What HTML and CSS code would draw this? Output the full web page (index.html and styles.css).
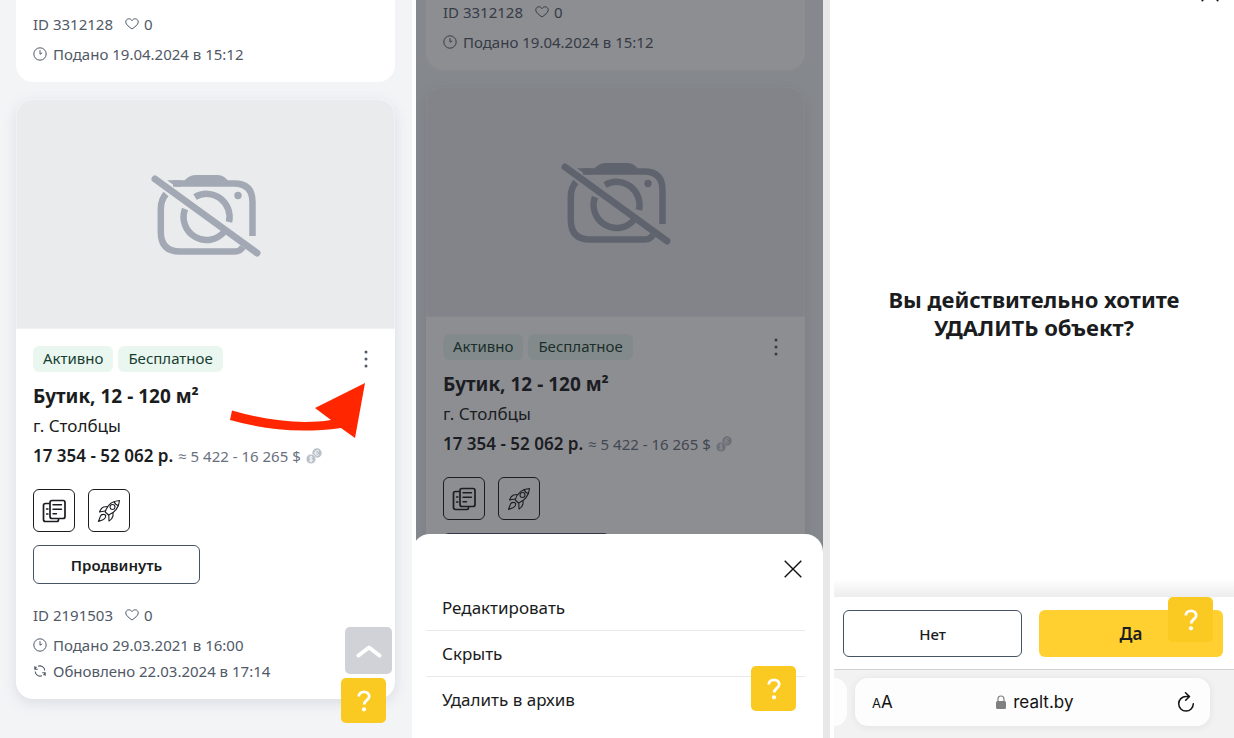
FILE: index.html
```html
<!DOCTYPE html>
<html lang="ru">
<head>
<meta charset="utf-8">
<meta name="viewport" content="width=device-width, initial-scale=1">
<title>Удаление объекта</title>
<link rel="stylesheet" href="styles.css">
</head>
<body>
<svg class="sprite" aria-hidden="true">
  <symbol id="heart" viewBox="0 0 14 12"><path d="M7 11C4.600 9.200.8 6.800.8 3.900.8 2.100 2.200.8 3.800.8 5.200.8 6.300 1.500 7 2.600 7.700 1.500 8.800.8 10.200.8 11.800.8 13.200 2.100 13.200 3.900 13.200 6.800 9.400 9.200 7 11Z" fill="none" stroke="currentColor"/></symbol>
  <symbol id="clock" viewBox="0 0 14 14"><circle cx="7" cy="7" r="6.200" fill="none" stroke="currentColor"/><path d="M7 3.200V7.200L9.200 5.900" fill="none" stroke="currentColor"/></symbol>
  <symbol id="sync" viewBox="0 0 14 14"><path d="M5 2.200A5 5 0 0 1 11.800 6.500M9 11.800A5 5 0 0 1 2.200 7.500M1.800 2.300V5.300H4.800M2 5A5 5 0 0 1 3.500 3M12.200 11.700V8.700H9.200M12 9A5 5 0 0 1 10.500 11" fill="none" stroke="currentColor" stroke-width="1.100"/></symbol>
  <symbol id="camera" viewBox="0 0 110 82">
    <g fill="none" stroke="currentColor" stroke-width="6.500">
      <path d="M15 19C11.500 23 9.800 28 9.800 34V57Q9.800 76.500 29 76.500H84Q89 76.500 92 72"/>
      <path d="M22 8.500H83Q101.500 8.500 101.500 27V61"/>
      <path d="M34 34A23 23 0 0 0 73 57"/>
      <path d="M44 22A23 23 0 0 1 78 47"/>
      <path d="M4 4 106 78" stroke-linecap="round" stroke-width="7"/>
    </g>
    <path d="M32 7Q38 0 44 0H67Q73 0 78 7ZM16 5.200H30V11.700H25Z" fill="currentColor"/>
    <circle cx="87" cy="20.500" r="3.700" fill="currentColor"/>
  </symbol>
  <symbol id="coins" viewBox="0 0 16 16"><circle cx="11" cy="5" r="4.700" fill="currentColor"/><circle cx="5" cy="11" r="4.900" fill="currentColor" stroke="#fff" stroke-width=".7"/><path d="M13 3.200A2.400 2.400 0 1 0 13 6.600M9 5H12M6.700 9.500C5.700 8.300 3.500 8.800 3.700 10.100S6.600 11 6.500 12.200 4 13.600 3.200 12.500M5 7.700V14.300" fill="none" stroke="#fff" stroke-width=".9"/></symbol>
  <symbol id="docs" viewBox="0 0 24 24"><g fill="none" stroke="currentColor" stroke-width="1.700" stroke-linecap="round" stroke-linejoin="round"><path d="M7 4.500H3.500Q1.500 4.500 1.500 6.500V20.500Q1.500 22.500 3.500 22.500H15Q16.500 22.500 16.500 20.500"/><rect x="8" y="1.500" width="15" height="18" rx="2"/><path d="M11 5.800H19.500M11 10.300H19.500M11 14.800H14.500M4.500 10H6M4.500 15H6" stroke-width="1.400"/></g></symbol>
  <symbol id="rocket" viewBox="0 0 24 24"><g fill="none" stroke="currentColor" stroke-width="1.100" stroke-linejoin="round"><path d="M8.200 13C10 6.500 15 2 22.500 1.500 22 8.500 17.500 14 11.500 16ZM8.200 13 11.500 16"/><circle cx="15.500" cy="8" r="2.500"/><path d="M17 2.500Q18 5.500 21.500 6.500M10.500 7.500 6.500 8Q4 9 2.500 13L8 12M16 13.500V17Q15 20.500 12 22L11.800 16M7.500 15.500Q4 15 3.300 17.500L1.500 22.500 6.500 20.500Q9 19 8.700 16.500Z"/></g></symbol>
  <symbol id="dots" viewBox="0 0 4 18"><g fill="currentColor"><circle cx="2" cy="2" r="1.500"/><circle cx="2" cy="9" r="1.500"/><circle cx="2" cy="16" r="1.500"/></g></symbol>
  <symbol id="question" viewBox="0 0 14 22"><path d="M1.800 6.500C1.800 3.500 4 1.800 7 1.800S12.200 3.600 12.200 6.400C12.200 10 7.200 10.300 7.200 14.500" fill="none" stroke="currentColor" stroke-width="2.800"/><circle cx="7" cy="19.300" r="2.100" fill="currentColor"/></symbol>
</svg>

<main class="screens">
  <section class="screen screen-list">
    <div class="listing">
      <article class="card card-prev">
        <ul class="meta">
          <li class="meta-id"><span>ID 3312128</span><svg class="icon-heart"><use href="#heart"/></svg><span>0</span></li>
          <li><svg class="icon-small"><use href="#clock"/></svg>Подано 19.04.2024 в 15:12</li>
        </ul>
      </article>
      <article class="card">
        <div class="photo"><svg class="camera"><use href="#camera"/></svg></div>
        <div class="card-body">
          <div class="tags">
            <span class="tag">Активно</span><span class="tag">Бесплатное</span>
            <button class="more" aria-label="Действия"><svg><use href="#dots"/></svg></button>
          </div>
          <h2 class="title">Бутик, 12 - 120 м²</h2>
          <p class="place">г. Столбцы</p>
          <p class="price"><strong>17 354 - 52 062 р.</strong><span>≈ 5 422 - 16 265 $</span><svg><use href="#coins"/></svg></p>
          <div class="tools">
            <button class="tool" aria-label="Копировать"><svg><use href="#docs"/></svg></button>
            <button class="tool" aria-label="Поднять"><svg><use href="#rocket"/></svg></button>
          </div>
          <button class="promote">Продвинуть</button>
        </div>
        <ul class="meta">
          <li class="meta-id"><span>ID 2191503</span><svg class="icon-heart"><use href="#heart"/></svg><span>0</span></li>
          <li><svg class="icon-small"><use href="#clock"/></svg>Подано 29.03.2021 в 16:00</li>
          <li><svg class="icon-small"><use href="#sync"/></svg>Обновлено 22.03.2024 в 17:14</li>
        </ul>
        <svg class="arrow" viewBox="0 0 136 56" aria-hidden="true"><path d="M2 27.500 0 37C32 46 68 51 111 45L125 55 135 0 85 25 101 37C70 42 35 37 2 27.500Z" fill="#ff2600"/></svg>
      </article>
    </div>
    <button class="to-top" aria-label="Наверх"><svg viewBox="0 0 26 14"><path d="M2.500 11.500 13 3.500 23.500 11.500" fill="none" stroke="currentColor" stroke-width="4" stroke-linecap="round" stroke-linejoin="round"/></svg></button>
    <button class="help help-list" aria-label="Помощь"><svg><use href="#question"/></svg></button>
  </section>

  <section class="screen screen-menu">
    <div class="listing">
      <article class="card card-prev">
        <ul class="meta">
          <li class="meta-id"><span>ID 3312128</span><svg class="icon-heart"><use href="#heart"/></svg><span>0</span></li>
          <li><svg class="icon-small"><use href="#clock"/></svg>Подано 19.04.2024 в 15:12</li>
        </ul>
      </article>
      <article class="card">
        <div class="photo"><svg class="camera"><use href="#camera"/></svg></div>
        <div class="card-body">
          <div class="tags">
            <span class="tag">Активно</span><span class="tag">Бесплатное</span>
            <button class="more" aria-label="Действия"><svg><use href="#dots"/></svg></button>
          </div>
          <h2 class="title">Бутик, 12 - 120 м²</h2>
          <p class="place">г. Столбцы</p>
          <p class="price"><strong>17 354 - 52 062 р.</strong><span>≈ 5 422 - 16 265 $</span><svg><use href="#coins"/></svg></p>
          <div class="tools">
            <button class="tool" aria-label="Копировать"><svg><use href="#docs"/></svg></button>
            <button class="tool" aria-label="Поднять"><svg><use href="#rocket"/></svg></button>
          </div>
          <button class="promote">Продвинуть</button>
        </div>
      </article>
    </div>
    <div class="shade"></div>
    <div class="sheet" role="dialog" aria-label="Действия с объектом">
      <button class="close" aria-label="Закрыть"><svg viewBox="0 0 18 18"><path d="M.7.7 17.300 17.300M17.300.7.7 17.300" stroke="currentColor" stroke-width="1.400"/></svg></button>
      <ul class="actions">
        <li><button>Редактировать</button></li>
        <li><button>Скрыть</button></li>
        <li><button>Удалить в архив</button></li>
      </ul>
      <button class="help help-menu" aria-label="Помощь"><svg><use href="#question"/></svg></button>
    </div>
  </section>

  <section class="screen screen-confirm">
    <button class="close close-confirm" aria-label="Закрыть"><svg viewBox="0 0 18 18"><path d="M.7.7 17.300 17.300M17.300.7.7 17.300" stroke="currentColor" stroke-width="1.400"/></svg></button>
    <div class="question"><h1>Вы действительно хотите<br>УДАЛИТЬ объект?</h1></div>
    <div class="answers">
      <button class="answer">Нет</button>
      <button class="answer answer-yes">Да</button>
      <button class="help help-confirm" aria-label="Помощь"><svg><use href="#question"/></svg></button>
    </div>
    <div class="browser">
      <div class="tab-edge"></div>
      <div class="address">
        <span class="text-size"><small>A</small>A</span>
        <span class="host"><svg viewBox="0 0 10 14"><rect y="6" width="10" height="8" rx="1.500" fill="#808080"/><path d="M2 7V4Q2 1 5 1T8 4V7" fill="none" stroke="#808080" stroke-width="1.200"/></svg>realt.by</span>
        <button class="reload" aria-label="Обновить"><svg viewBox="0 0 18 20"><path d="M11.500 4.500H9A7.300 7.300 0 1 0 16.300 11.800M8.500.8 12.500 4.500 8.700 8.200" fill="none" stroke="currentColor" stroke-width="1.500" stroke-linecap="round" stroke-linejoin="round"/></svg></button>
      </div>
    </div>
  </section>
</main>
</body>
</html>
```
FILE: styles.css
```css
* { box-sizing: border-box; }

body {
  margin: 0;
  background: #fff;
  color: #1a1c20;
  font-family: "Noto Sans", "Open Sans", sans-serif;
  font-size: 15px;
}

h1, h2, p, ul { margin: 0; padding: 0; }
ul { list-style: none; }
svg { display: block; flex: none; }

button {
  margin: 0;
  padding: 0;
  border: 0;
  background: none;
  color: inherit;
  font: inherit;
  cursor: pointer;
}

.sprite { position: absolute; width: 0; height: 0; }

.screens {
  display: grid;
  grid-template-columns: 412fr 418fr 404fr;
  height: 100vh;
  overflow: hidden;
}

.screen { position: relative; overflow: hidden; min-width: 0; }
.screen-list { background: #f3f4f6; }
.screen-menu { background: #eff4f6; border-left: 4px solid #fff; border-right: 7px solid #e8e8e8; }
.screen-confirm { display: flex; flex-direction: column; border-left: 4px solid #fff; }

.listing { display: flex; flex-direction: column; gap: 17px; padding: 0 17px 0 16px; }
.screen-menu .listing { padding: 0 18px 0 10px; }

.card {
  position: relative;
  border-radius: 17px;
  background: #fff;
  box-shadow: 0 4px 14px rgba(70, 95, 120, 0.14);
}
.card-prev { padding-top: 11px; border-radius: 0 0 17px 17px; box-shadow: none; }
.screen-menu .card-prev { margin-top: -12px; }

.photo {
  display: flex;
  justify-content: center;
  align-items: center;
  height: 230px;
  padding-top: 4px;
  border: 1px solid #eff1f3;
  border-radius: 17px 17px 0 0;
  background: #eaebed;
  color: #a2a9b4;
}
.camera { width: 110px; height: 82px; }

.card-body { padding: 17px 17px 18px; }

.tags { display: flex; gap: 5px; }
.tag {
  padding: 0 10px;
  border-radius: 6px;
  background: #eaf7f0;
  color: #173f30;
  line-height: 25px;
}
.more { margin-left: auto; padding: 4px 10px; color: #505966; }
.more svg { width: 4px; height: 18px; }

.title { margin-top: 9px; font-size: 19px; font-weight: 700; line-height: 30px; }
.place { font-size: 17px; line-height: 30px; }
.price { display: flex; align-items: center; gap: 5px; line-height: 30px; white-space: nowrap; }
.price strong { font-size: 17px; font-weight: 600; }
.price span { color: #69717e; }
.price svg { width: 16px; height: 16px; color: #b9c0c8; }

.tools { display: flex; gap: 13px; margin-top: 18px; }
.tool {
  display: grid;
  place-items: center;
  width: 42px;
  height: 43px;
  border: 1px solid #1a1c20;
  border-radius: 6px;
}
.tool svg { width: 24px; height: 24px; }

.promote {
  display: block;
  width: 167px;
  height: 39px;
  margin-top: 13px;
  border: 1px solid #465362;
  border-radius: 6px;
  font-weight: 600;
}

.meta { padding: 0 17px 15px; color: #505966; line-height: 26px; }
.meta li { display: flex; align-items: center; gap: 6px; }
.meta .meta-id { gap: 5px; margin-bottom: 4px; }
.icon-small { width: 14px; height: 14px; }
.icon-heart { width: 14px; height: 12px; margin-left: 7px; }

.arrow { position: absolute; top: 284px; right: 29px; width: 136px; height: 56px; }

.help {
  position: absolute;
  display: grid;
  place-items: center;
  width: 45px;
  height: 45px;
  border-radius: 5px;
  background: #fac922;
  color: #fff;
}
.help svg { width: 14px; height: 22px; }
.help-list { right: 26px; bottom: 15px; }
.help-menu { right: 27px; bottom: 27px; }
.help-confirm { top: 0; right: 21px; }

.to-top {
  position: absolute;
  right: 20px;
  bottom: 64px;
  display: grid;
  place-items: center;
  width: 47px;
  height: 47px;
  border-radius: 5px;
  background: #d1d2d7;
  color: #fff;
}
.to-top svg { width: 26px; height: 14px; }

.shade { position: absolute; inset: 0; background: rgba(28, 30, 38, 0.5); }

.sheet {
  position: absolute;
  right: 0;
  bottom: 0;
  left: -4px;
  padding: 26px 18px 16px 14px;
  border-radius: 18px 18px 0 0;
  background: #fff;
}
.close { display: block; width: 18px; margin: 0 3px 0 auto; color: #111; }
.close svg { width: 18px; height: 18px; }
.actions { margin-top: 7px; }
.actions li + li { border-top: 1px solid #e8e9eb; }
.actions button { display: block; width: 100%; padding: 0 16px; font-size: 17px; line-height: 45px; text-align: left; }

.close-confirm { position: absolute; top: -16px; right: 12px; }
.question {
  display: flex;
  flex: 1;
  justify-content: center;
  align-items: center;
  padding-top: 29px;
  text-align: center;
  background: linear-gradient(to top, #ededed, #fff 18px);
}
.question h1 { font-size: 22px; font-weight: 700; line-height: 28px; }

.answers {
  position: relative;
  display: grid;
  grid-template-columns: 179fr 184fr;
  gap: 17px;
  padding: 13px 11px 12px 9px;
  background: #fff;
}
.answer { height: 47px; border: 1px solid #465362; border-radius: 6px; font-weight: 500; }
.answer-yes { border: 0; background: #ffd02f; font-size: 17px; font-weight: 600; }

.browser {
  display: flex;
  gap: 8px;
  padding: 8px 24px 12px 0;
  border-top: 1px solid #d2d2d2;
  background: #f2f2f2;
  font-family: Inter, "Liberation Sans", sans-serif;
  color: #111;
}
.tab-edge { width: 13px; border-radius: 0 13px 13px 0; background: #fdfdfd; }
.address {
  display: flex;
  flex: 1;
  justify-content: space-between;
  align-items: center;
  height: 48px;
  padding: 0 15px 0 17px;
  border-radius: 13px;
  background: #fdfdfd;
  box-shadow: 0 1px 8px rgba(0, 0, 0, 0.07);
}
.text-size { font-size: 17px; }
.text-size small { font-size: 13px; }
.host { display: flex; align-items: center; gap: 7px; font-size: 17px; }
.host svg { width: 10px; height: 14px; }
.reload svg { width: 18px; height: 20px; }
```
